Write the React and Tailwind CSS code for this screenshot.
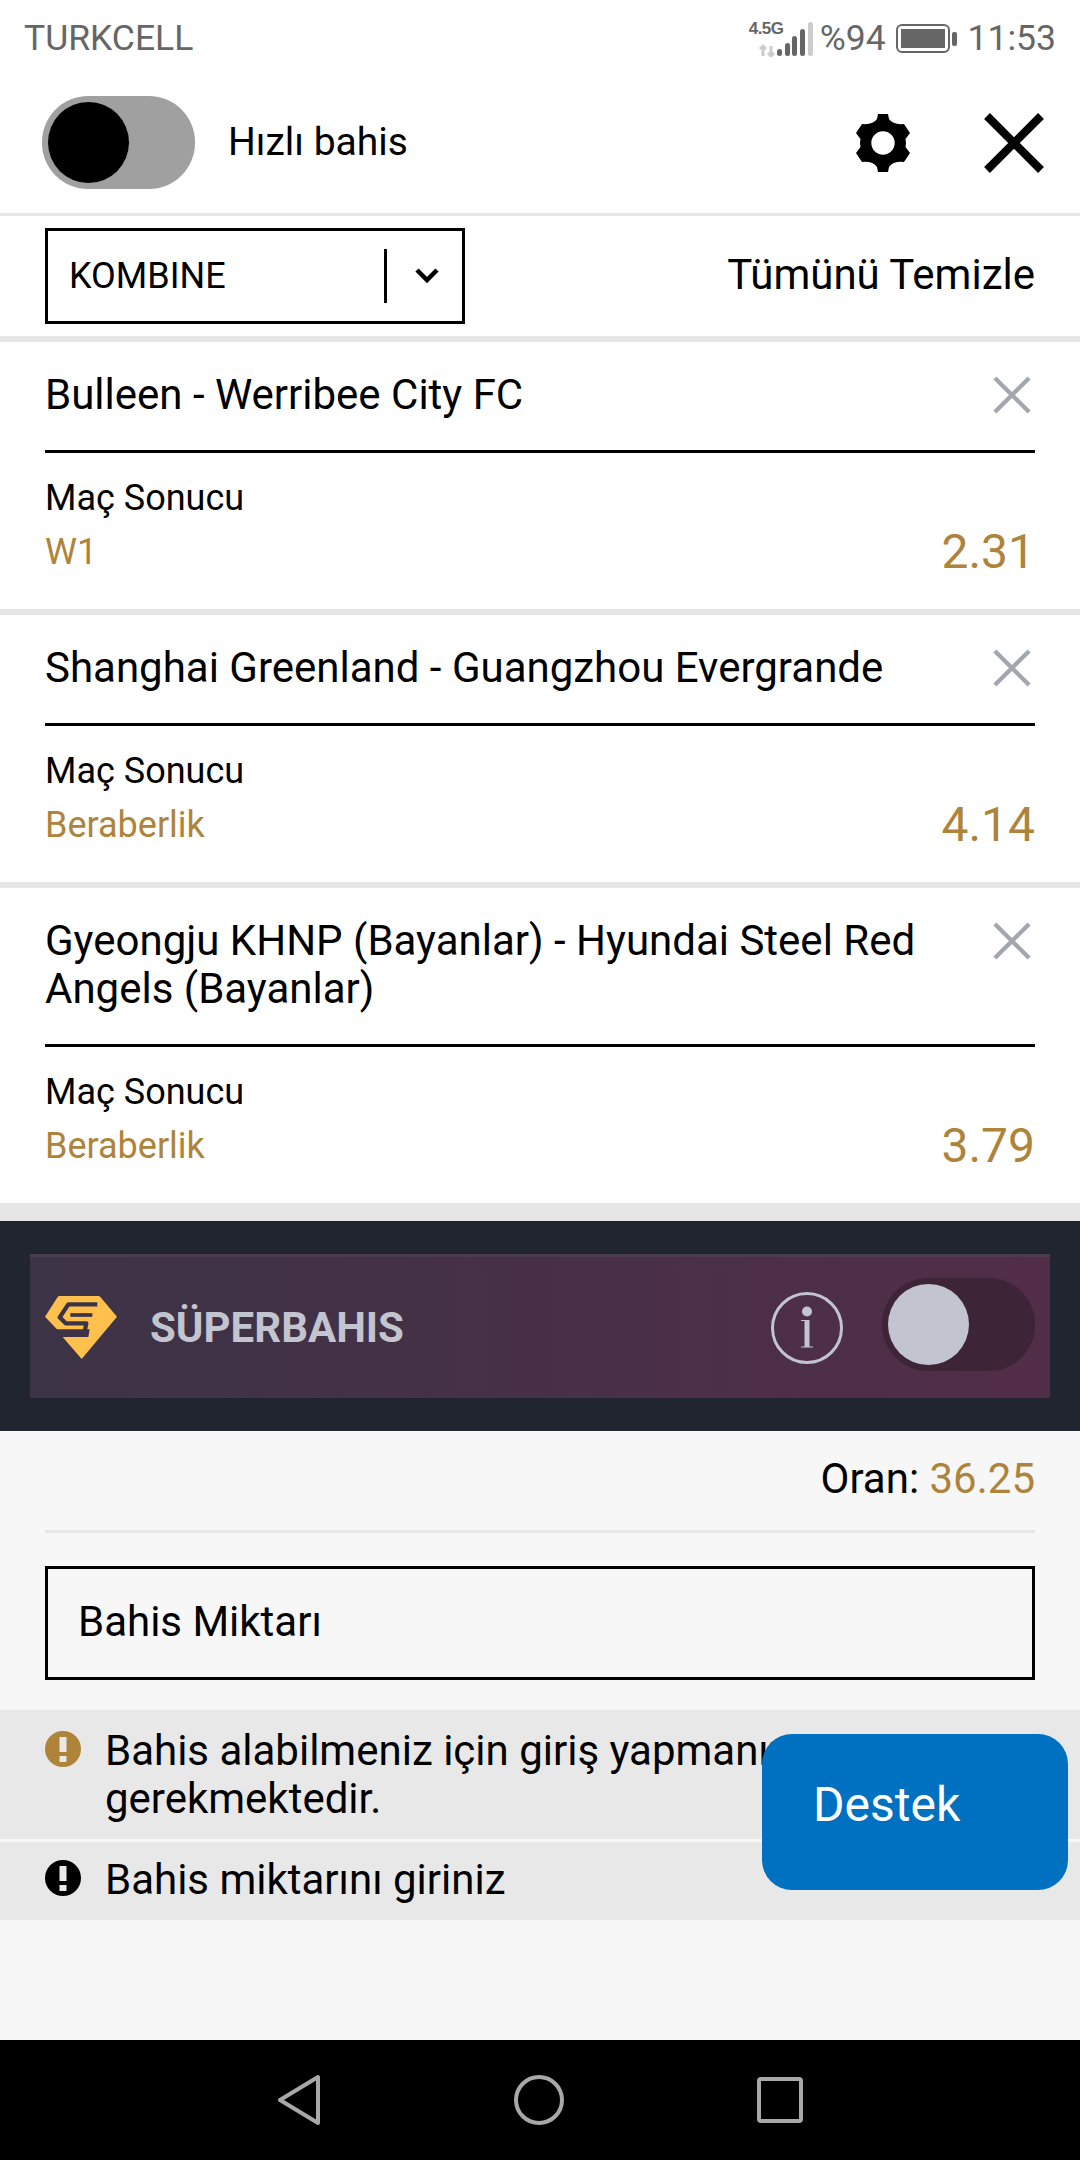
import React from "react";

const Gear = () => (
  <svg width="54" height="58" viewBox="0 0 54 58" fill="#000">
    <path fillRule="evenodd" d="M22 0H32L33 5Q37 11 48 10L54 19L49.5 25Q50.5 29 49.5 33L54 39L48 48Q37 47 33 53L32 58H22L21 53Q17 47 6 48L0 39L4.5 33Q3.5 29 4.5 25L0 19L6 10Q17 11 21 5ZM27 17.3a11.7 11.7 0 1 0 0 23.4a11.7 11.7 0 0 0 0-23.4Z" />
  </svg>
);

const Cross = ({ size, color, w }) => (
  <svg width={size} height={size} viewBox="0 0 40 40" stroke={color} strokeWidth={w} fill="none">
    <path d="M2 2 38 38M38 2 2 38" />
  </svg>
);

const Bang = ({ color }) => (
  <svg width="36" height="36" viewBox="0 0 36 36" className="shrink-0">
    <circle cx="18" cy="18" r="18" fill={color} />
    <rect x="14.5" y="6" width="7" height="15" fill="#e8e8e8" />
    <rect x="14.5" y="25" width="7" height="6" fill="#e8e8e8" />
  </svg>
);

const Bet = ({ title, pick, odd, titleClass = "h-[111px]" }) => (
  <div className="bg-white px-[45px] border-b-[6px] border-[#e6e6e6]">
    <div className={`${titleClass} border-b-[3px] border-black flex justify-between pt-[30px]`}>
      <div className="text-[42px] leading-[48px] text-black w-[880px] -mt-[1px]">{title}</div>
      <div className="mt-[4px] mr-[4px]"><Cross size={38} color="#a2a7af" w={4.5} /></div>
    </div>
    <div className="pt-[24px] h-[156px]">
      <div className="text-[36px] leading-[42px] text-black">Maç Sonucu</div>
      <div className="flex justify-between items-center mt-[9px] h-[48px] text-[#ad843a]">
        <span className="text-[36px]">{pick}</span>
        <span className="text-[48px]">{odd}</span>
      </div>
    </div>
  </div>
);

export default function App() {
  return (
    <div className="w-[1080px] h-[2160px] relative flex flex-col bg-[#f7f7f7] overflow-hidden font-['Roboto',sans-serif]">
      <div className="h-[72px] bg-white flex items-center justify-between pl-[24px] pr-[24px] pt-[5px] text-[35.5px] text-[#666]">
        <span>TURKCELL</span>
        <div className="flex items-center">
          <div className="relative w-[64px] h-[36px] mr-[7px]">
            <span className="absolute left-0 -top-[1px] text-[17px] leading-[18px] font-bold font-['Liberation_Sans',sans-serif] tracking-[-0.5px] text-[#666]">4.5G</span>
            <svg width="64" height="36" viewBox="0 0 64 36" className="absolute left-0 top-0">
              <path d="M14 35V25M11 28l3-3 3 3" stroke="#ccc" strokeWidth="3" fill="none" />
              <path d="M22 25V35M19 32l3 3 3-3" stroke="#ccc" strokeWidth="3" fill="none" />
              <rect x="28" y="28" width="5" height="7" rx="2.5" fill="#666" />
              <rect x="36" y="22" width="5" height="13" rx="2.5" fill="#666" />
              <rect x="43" y="15" width="5" height="20" rx="2.5" fill="#666" />
              <rect x="51" y="8" width="5" height="27" rx="2.5" fill="#666" />
              <rect x="59" y="1" width="5" height="34" rx="2.5" fill="#ccc" />
            </svg>
          </div>
          <span>%94</span>
          <svg width="61" height="29" viewBox="0 0 61 29" className="ml-[10px] mr-[11px]">
            <rect x="1" y="1" width="52" height="27" rx="5" fill="none" stroke="#666" strokeWidth="2" />
            <rect x="5" y="5" width="44" height="19" fill="#666" />
            <rect x="56" y="8" width="5" height="14" rx="2" fill="#666" />
          </svg>
          <span>11:53</span>
        </div>
      </div>

      <div className="h-[144px] bg-white border-b-[3px] border-[#e6e6e6] flex items-center pl-[42px] pr-[36px]">
        <div className="w-[153px] h-[93px] rounded-[46px] bg-[#a0a0a0] pl-[6px] flex items-center">
          <div className="w-[81px] h-[81px] rounded-full bg-black" />
        </div>
        <span className="ml-[33px] text-[39px] text-black">Hızlı bahis</span>
        <div className="ml-auto mr-[74px] flex"><Gear /></div>
        <Cross size={60} color="#000" w={5.5} />
      </div>

      <div className="h-[126px] bg-white border-b-[6px] border-[#e6e6e6] flex items-start justify-between pl-[45px] pr-[45px] pt-[12px]">
        <div className="w-[420px] h-[96px] border-[3px] border-black flex items-center pl-[21px]">
          <span className="w-[315px] text-[36px] text-black">KOMBINE</span>
          <div className="w-[3px] h-[54px] bg-black" />
          <svg width="26" height="18" viewBox="0 0 26 18" className="ml-[27px]" fill="none" stroke="#000" strokeWidth="4.5"><path d="M3 3 13 13 23 3" /></svg>
        </div>
        <span className="text-[42px] leading-[94px] text-black">Tümünü Temizle</span>
      </div>

      <Bet title="Bulleen - Werribee City FC" pick="W1" odd="2.31" />
      <Bet title="Shanghai Greenland - Guangzhou Evergrande" pick="Beraberlik" odd="4.14" />
      <Bet title="Gyeongju KHNP (Bayanlar) - Hyundai Steel Red Angels (Bayanlar)" pick="Beraberlik" odd="3.79" titleClass="h-[159px]" />

      <div className="h-[12px] bg-[#e6e6e6] shrink-0" />
      <div className="h-[210px] bg-[#212530] px-[30px] pt-[33px] shrink-0">
        <div className="h-[144px] bg-gradient-to-r from-[#3c3346] to-[#522d48] border-t-[3px] border-[#4c3c50] flex items-center pl-[15px] pr-[15px]">
          <svg width="72" height="63" viewBox="0 0 216 189">
            <path fill="#ffc04d" d="M38 3Q40 0 44 0H160Q164 0 166 3L216 62 110 189 53 123H130L134 100H36L0 62Z" />
            <path fill="none" stroke="#3c3346" strokeWidth="13" strokeLinejoin="round" d="M157 25H70L44 64 62 82H124L119 106" />
            <path fill="none" stroke="#3c3346" strokeWidth="11" d="M76 57H142" />
          </svg>
          <span className="ml-[33px] text-[42px] font-bold text-[#c2c4d0]">SÜPERBAHIS</span>
          <svg width="72" height="72" viewBox="0 0 72 72" className="ml-auto mr-[39px]" fill="none">
            <circle cx="36" cy="36" r="34.5" stroke="#c2c4d0" strokeWidth="3" />
            <circle cx="36" cy="19.5" r="5" fill="#c2c4d0" />
            <path d="M33.5 28H38.5V55H33.5Z" fill="#c2c4d0" />
            <path d="M30 28.5H38M30 55H42" stroke="#c2c4d0" strokeWidth="1.2" />
          </svg>
          <div className="w-[153px] h-[93px] -mt-[6px] rounded-[46px] bg-[#3d2436] pl-[6px] flex items-center">
            <div className="w-[81px] h-[81px] rounded-full bg-[#c2c4d0]" />
          </div>
        </div>
      </div>

      <div className="px-[45px] shrink-0">
        <div className="h-[102px] border-b-[3px] border-[#e6e6e6] text-right text-[42px] leading-[96px] text-black">
          Oran: <span className="text-[#ad843a]">36.25</span>
        </div>
        <div className="mt-[33px] h-[114px] border-[3px] border-black flex items-center pl-[30px] pb-[3px] text-[42px] text-black">Bahis Miktarı</div>
      </div>

      <div className="mt-[30px] bg-[#e8e8e8] border-b-[3px] border-[#f7f7f7] h-[132px] flex gap-[24px] pl-[45px] pr-[45px] pt-[17px] shrink-0">
        <div className="mt-[4px]"><Bang color="#ad843a" /></div>
        <div className="text-[42px] leading-[48px] text-black">Bahis alabilmeniz için giriş yapmanız gerekmektedir.</div>
      </div>
      <div className="bg-[#e8e8e8] h-[78px] flex gap-[24px] pl-[45px] pt-[14px] shrink-0">
        <div className="mt-[4px]"><Bang color="#000" /></div>
        <div className="text-[42px] leading-[48px] text-black">Bahis miktarını giriniz</div>
      </div>

      <div className="mt-auto h-[120px] bg-black flex items-center justify-center gap-[193px] shrink-0">
        <svg width="44" height="52" viewBox="0 0 44 52" fill="none" stroke="#a8a8a8" strokeWidth="4" strokeLinejoin="round"><path d="M41 3V49L3 26Z" /></svg>
        <svg width="50" height="50" viewBox="0 0 50 50" fill="none" stroke="#a8a8a8" strokeWidth="4"><circle cx="25" cy="25" r="23" /></svg>
        <svg width="46" height="46" viewBox="0 0 46 46" fill="none" stroke="#a8a8a8" strokeWidth="4"><rect x="2" y="2" width="42" height="42" rx="2" /></svg>
      </div>

      <div className="absolute left-[762px] top-[1734px] w-[306px] h-[156px] rounded-[30px] bg-[#0071c1] text-white text-[48px] flex items-center pl-[51px] pb-[14px]">Destek</div>
    </div>
  );
}
